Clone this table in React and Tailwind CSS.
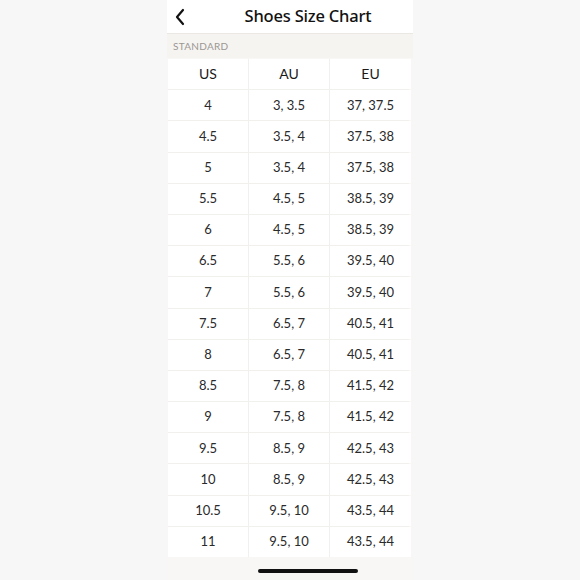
const rows = [
  ['4', '3, 3.5', '37, 37.5'],
  ['4.5', '3.5, 4', '37.5, 38'],
  ['5', '3.5, 4', '37.5, 38'],
  ['5.5', '4.5, 5', '38.5, 39'],
  ['6', '4.5, 5', '38.5, 39'],
  ['6.5', '5.5, 6', '39.5, 40'],
  ['7', '5.5, 6', '39.5, 40'],
  ['7.5', '6.5, 7', '40.5, 41'],
  ['8', '6.5, 7', '40.5, 41'],
  ['8.5', '7.5, 8', '41.5, 42'],
  ['9', '7.5, 8', '41.5, 42'],
  ['9.5', '8.5, 9', '42.5, 43'],
  ['10', '8.5, 9', '42.5, 43'],
  ['10.5', '9.5, 10', '43.5, 44'],
  ['11', '9.5, 10', '43.5, 44'],
];

export default function App() {
  return (
    <div className="w-[580px] h-[580px] bg-[#f7f7f7] flex justify-center overflow-hidden font-['Lato',sans-serif] text-[#222]">
      <div className="w-[246px] h-full bg-[#f8f7f5] flex flex-col">
        {/* Nav bar */}
        <header className="h-[34px] bg-white border-b border-[#ebe8e3] flex items-center relative shrink-0">
          <svg className="absolute left-[6px] top-[8px]" width="14" height="18" viewBox="0 0 14 18" fill="none">
            <path d="M10 2 L4 9 L10 16" stroke="#111" strokeWidth="2.2" strokeLinecap="round" strokeLinejoin="round" />
          </svg>
          <h1 className="w-full text-center text-[16.5px] font-medium text-[#111] pl-[36px] -mt-[1px] font-['Noto_Sans',sans-serif] tracking-[-0.2px]">Shoes Size Chart</h1>
        </header>

        {/* Section label */}
        <div className="h-[24px] bg-[#f6f4f1] flex items-center px-[6px] shrink-0">
          <span className="text-[10px] text-[#9b9793] tracking-[0.3px]">STANDARD</span>
        </div>

        {/* Table */}
        <div className="pl-[1px] pr-[4px] pt-[1px]">
          <div className="grid grid-cols-[80px_80px_81px] gap-[1px] bg-[#f2f0ed]">
            {['US', 'AU', 'EU'].map((h) => (
              <div key={h} className="h-[30.2px] bg-white flex items-center justify-center text-[14px] text-[#1a1a1a] pb-[1px]">
                {h}
              </div>
            ))}
            {rows.map((r, i) =>
              r.map((c, j) => (
                <div key={i + '-' + j} className="h-[30.2px] bg-white flex items-center justify-center text-[13px] text-[#2a2a2a]">
                  {c}
                </div>
              ))
            )}
          </div>
        </div>

        {/* Home indicator */}
        <div className="flex-1 flex items-end justify-center pb-[7px] pl-[36px]">
          <div className="w-[100px] h-[4px] rounded-full bg-[#111]" />
        </div>
      </div>
    </div>
  );
}
